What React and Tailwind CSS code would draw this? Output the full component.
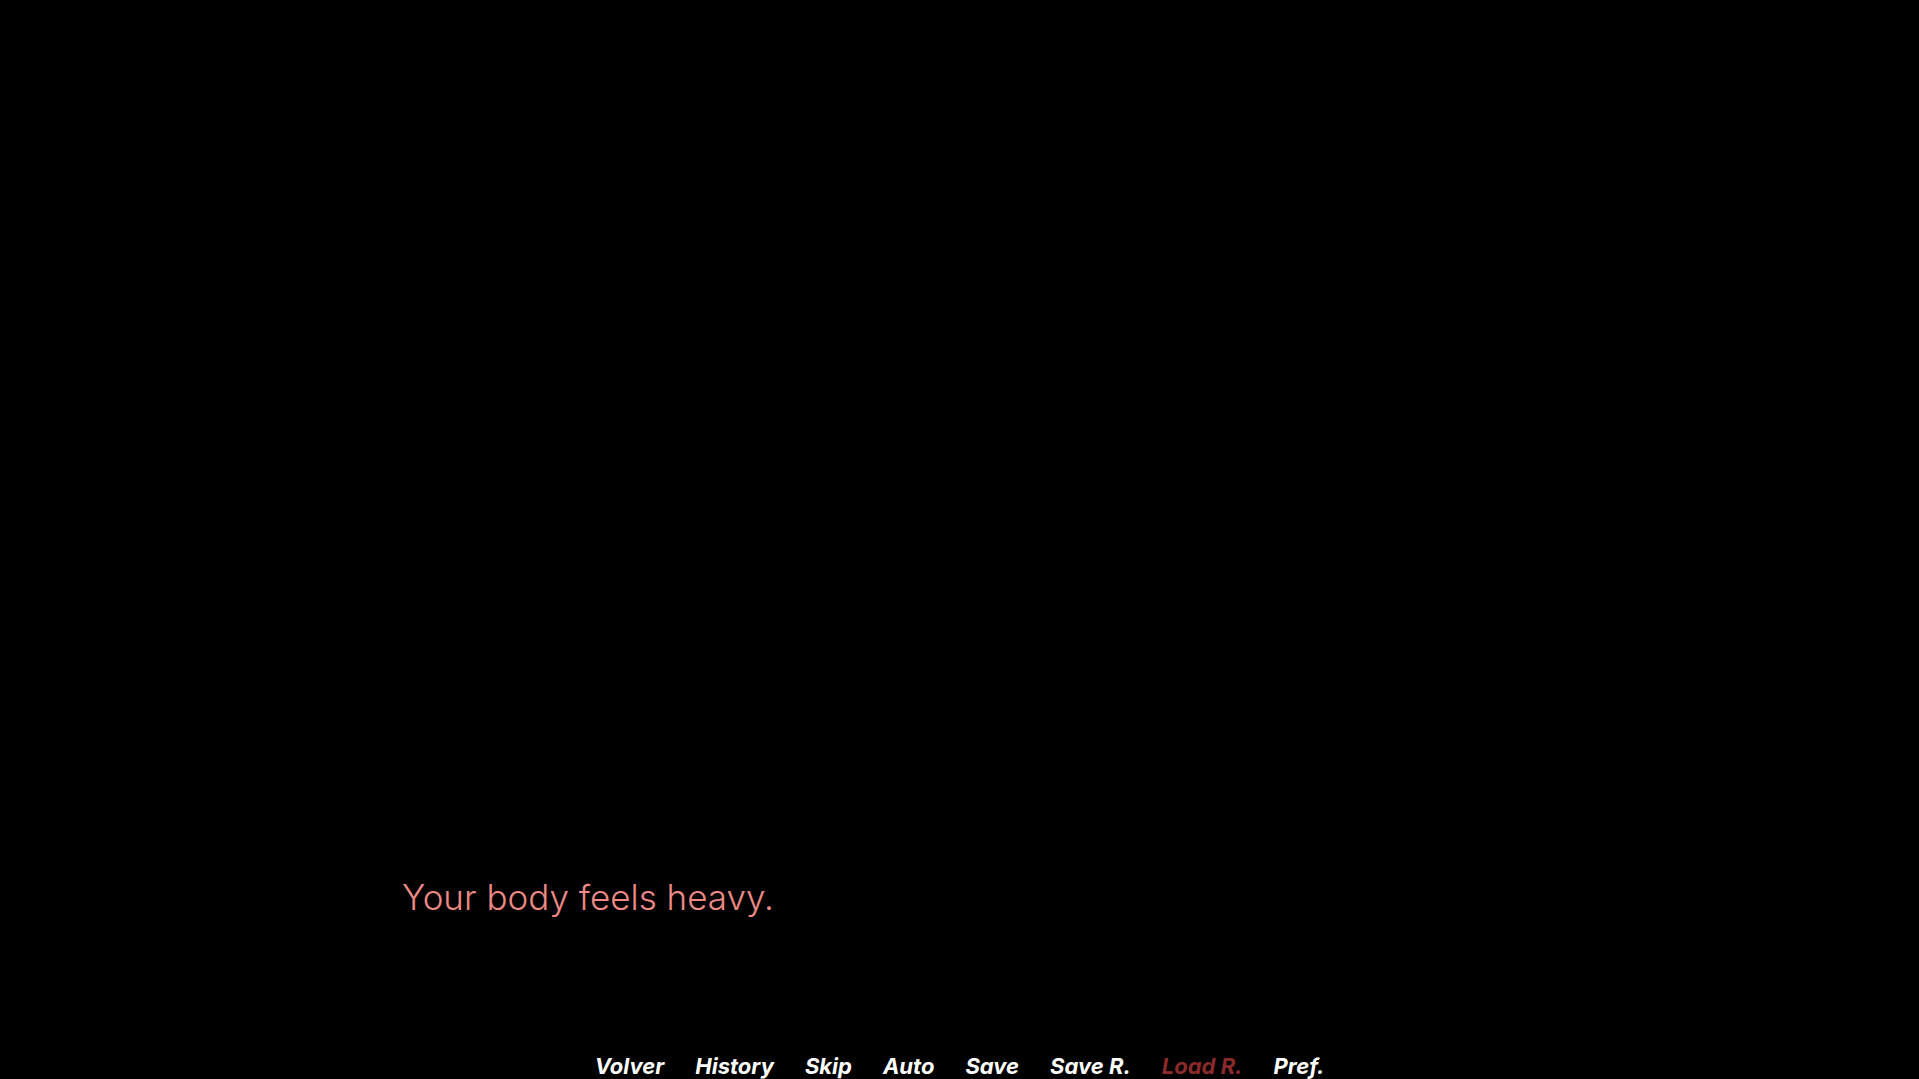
import React from "react";

const menu = [
  { label: "Volver" },
  { label: "History" },
  { label: "Skip" },
  { label: "Auto" },
  { label: "Save" },
  { label: "Save R." },
  { label: "Load R.", disabled: true },
  { label: "Pref." },
];

export default function App() {
  return (
    <div
      className="w-full h-[1079px] bg-black flex flex-col justify-end overflow-hidden"
      style={{ fontFamily: "Inter, 'Noto Sans', sans-serif" }}
    >
      <div className="pl-[402px]">
        <p className="text-[35px] leading-none font-light text-[#ee8a84]">
          Your body feels heavy.
        </p>
      </div>

      <nav className="mt-[140px] pb-[2px] flex justify-center gap-[31px]">
        {menu.map((item) => (
          <button
            key={item.label}
            className={
              "text-[22px] leading-none font-bold italic " +
              (item.disabled ? "text-[#8b2a2a]" : "text-white")
            }
          >
            {item.label}
          </button>
        ))}
      </nav>
    </div>
  );
}
